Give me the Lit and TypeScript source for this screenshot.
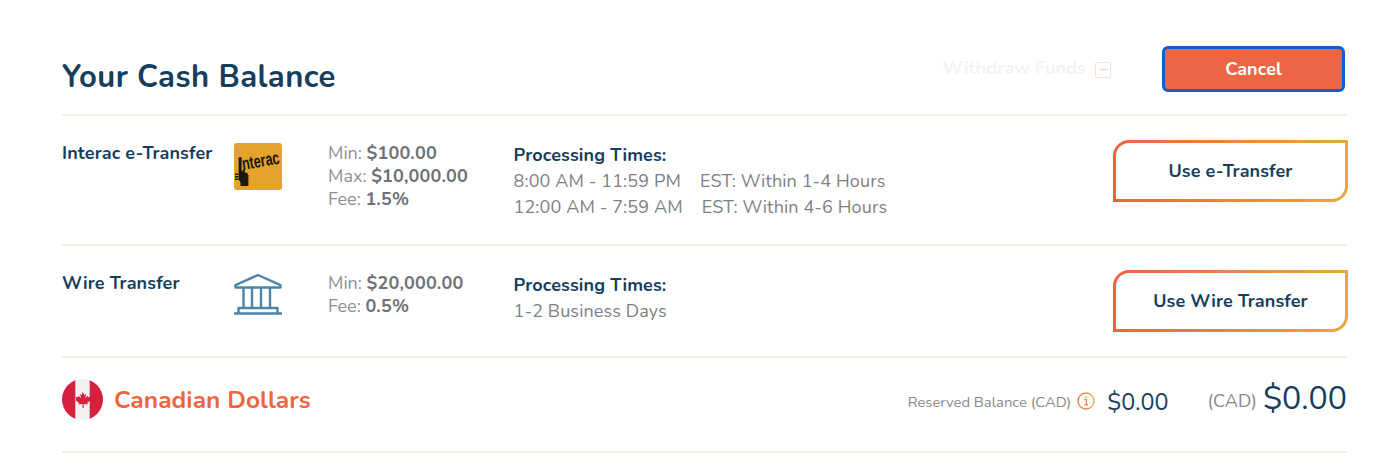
import { LitElement, html, css } from "lit";
import { customElement } from "lit/decorators.js";

@customElement("app-root")
export class AppRoot extends LitElement {
  static styles = css`
    :host { display: block; font-family: "Nunito", "Lato", "Noto Sans", sans-serif; color: #163e5c; background: #fff; }
    .page { padding: 0 32px 0 62px; height: 471px; box-sizing: border-box; overflow: hidden; }
    .head { height: 116px; box-sizing: border-box; border-bottom: 2px solid #f3efe7; display: flex; align-items: flex-start; }
    h1 { margin: 58px 0 0; font-size: 31px; line-height: 38px; font-weight: 700; letter-spacing: 0.43px; flex: 1; }
    .withdraw { margin: 55px 0 0; display: flex; align-items: center; gap: 9px; font-size: 18.3px; line-height: 26px; font-weight: 700; color: #f0f4f7; }
    .minus { width: 16px; height: 16px; box-sizing: border-box; border: 1px solid #fde0d4; border-radius: 2px; margin-top: 3px; display: flex; align-items: center; justify-content: center; }
    .minus i { width: 7px; height: 1.5px; background: #fbcfbf; display: block; }
    .cancel { margin: 46px 2px 0 51px; width: 183px; height: 46px; box-sizing: border-box; border: 3px solid #0d5fc9; border-radius: 6px; background: #ec6645; color: #fff; font: inherit; font-size: 18px; font-weight: 700; letter-spacing: 0.1px; padding: 0; }
    .row { display: grid; grid-template-columns: 172px 94px 186px 1fr auto; border-bottom: 2px solid #f1ede4; box-sizing: border-box; }
    .r1 { height: 130px; padding-top: 24px; }
    .r2 { height: 112px; padding-top: 24px; }
    .name { font-size: 18px; line-height: 27px; font-weight: 700; letter-spacing: 0.12px; }
    .limits { font-size: 18px; line-height: 23px; color: #8b8f93; padding-top: 2px; }
    .limits b { color: #6e7276; font-weight: 700; letter-spacing: 0.15px; }
    .proc { font-size: 18px; line-height: 26px; color: #7d8185; padding-top: 2px; letter-spacing: 0.12px; margin-left: -0.5px; }
    .proc strong { display: block; color: #163e5c; font-weight: 700; letter-spacing: 0.12px; }
    .use { margin: 0 -1px 0 0; width: 235px; height: 62px; box-sizing: border-box; border: 3px solid transparent; border-radius: 16px 0 16px 0;
      background: linear-gradient(#fff, #fff) padding-box, linear-gradient(90deg, #ed6141, #e8a93b) border-box;
      color: #163e5c; font: inherit; font-size: 18px; font-weight: 700; letter-spacing: 0.1px; padding: 0; }
    .icon-cell svg { display: block; }
    .bank { margin-top: 3px; }
    .logo { margin-top: 3px; }
    .totals { height: 95px; box-sizing: border-box; border-bottom: 2px solid #f1ede4; display: flex; align-items: center; padding-bottom: 10px; }
    .flag { width: 41px; height: 41px; margin-right: 11px; display: block; }
    .cur { font-size: 24.5px; font-weight: 700; color: #ee6541; flex: 1; letter-spacing: 0.06px; }
    .res { font-size: 14.8px; color: #85898c; margin: 4px 6px 0 0; }
    .info { margin: 3px 12px 0 0; display: block; }
    .amt { font-size: 23.3px; margin-top: 4px; }
    .cad { font-size: 18px; color: #85898c; margin: 3px 6px 0 39px; }
    .amt-l { font-size: 32px; margin-top: -3px; }
  `;

  render() {
    return html`<div class="page">
      <div class="head">
        <h1>Your Cash Balance</h1>
        <div class="withdraw">Withdraw Funds <span class="minus"><i></i></span></div>
        <button class="cancel">Cancel</button>
      </div>
      <div class="row r1">
        <div class="name">Interac e-Transfer</div>
        <div class="icon-cell">
          <svg class="logo" width="48" height="47" viewBox="0 0 48 47">
            <rect width="48" height="47" rx="3" fill="#e4a42c"></rect>
            <path d="M4.6 14.5L7.6 14V28l1.2.3V26l2 .3v3.2l2.6.6 1 2.2V43H6.5V39.5L4.6 36.5z" fill="#1a1611"></path>
            <path d="M1 30.5h3.4v1.5H1zM1 33h3.4v1.5H1zM1 35.5h3.4V37H1z" fill="#1a1611"></path>
            <g transform="translate(9 27) rotate(-10) scale(0.7 1)">
              <text x="0" y="0" font-family="Liberation Sans" font-weight="700" font-size="18" fill="#1a1611">nterac</text>
            </g>
          </svg>
        </div>
        <div class="limits">Min: <b>$100.00</b><br />Max: <b>$10,000.00</b><br />Fee: <b>1.5%</b></div>
        <div class="proc"><strong>Processing Times:</strong>8:00 AM - 11:59 PM&nbsp;&nbsp;&nbsp; EST: Within 1-4 Hours<br />12:00 AM - 7:59 AM&nbsp;&nbsp;&nbsp; EST: Within 4-6 Hours</div>
        <button class="use">Use e-Transfer</button>
      </div>
      <div class="row r2">
        <div class="name">Wire Transfer</div>
        <div class="icon-cell">
          <svg class="bank" width="48" height="42" viewBox="0 0 48 42" fill="none" stroke="#4b86a8" stroke-width="2.4">
            <path d="M24 2 46.5 12.2V14.5H1.5V12.2Z" stroke-linejoin="round"></path>
            <path d="M9.5 14.5V35M18 14.5V35M27 14.5V35M36 14.5V35"></path>
            <path d="M4.5 40.5V35H43.5V40.5M0 40.5H48" stroke-linejoin="round"></path>
          </svg>
        </div>
        <div class="limits">Min: <b>$20,000.00</b><br />Fee: <b>0.5%</b></div>
        <div class="proc"><strong>Processing Times:</strong>1-2 Business Days</div>
        <button class="use">Use Wire Transfer</button>
      </div>
      <div class="totals">
        <svg class="flag" viewBox="0 0 40 40">
          <defs><clipPath id="c"><circle cx="20" cy="20" r="20"></circle></clipPath></defs>
          <g clip-path="url(#c)">
            <rect width="40" height="40" fill="#f0f1f1"></rect>
            <rect width="13" height="40" fill="#d71f3f"></rect>
            <rect x="27" width="13" height="40" fill="#d71f3f"></rect>
            <path d="M20 12.5l1.7 3 1.7-.9-.7 4.2 2.2-2.4.6 1.4 2.4-.5-.7 2.6 1 .6-3.6 3 .5 1.4-4-.5.2 3.6h-1.4l.2-3.6-4 .5.5-1.4-3.6-3 1-.6-.7-2.6 2.4.5.6-1.4 2.2 2.4-.7-4.2 1.7.9z" fill="#d71f3f"></path>
          </g>
        </svg>
        <div class="cur">Canadian Dollars</div>
        <span class="res">Reserved Balance (CAD)</span>
        <svg class="info" width="18" height="18" viewBox="0 0 18 18" fill="none">
          <defs><linearGradient id="g" x1="0" x2="1"><stop offset="0" stop-color="#ee6a42"></stop><stop offset="1" stop-color="#eba63f"></stop></linearGradient></defs>
          <circle cx="9" cy="9" r="8" stroke="url(#g)" stroke-width="1.3"></circle>
          <path d="M7.3 7.6H9.4V12.6M7.3 12.8H11M9 4.6V6" stroke="#ee8040" stroke-width="1.2"></path>
        </svg>
        <span class="amt">$0.00</span>
        <span class="cad">(CAD)</span>
        <span class="amt-l">$0.00</span>
      </div>
    </div>`;
  }
}
